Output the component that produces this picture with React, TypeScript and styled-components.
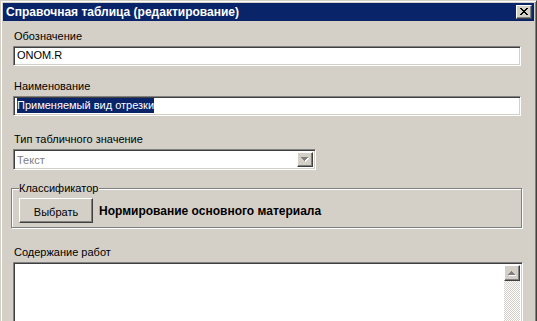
import { FC } from "react";
import styled, { createGlobalStyle } from "styled-components";

const GlobalStyle = createGlobalStyle`
  html, body {
    margin: 0;
    padding: 0;
    height: 321px;
    background: #d4d0c8;
    overflow: hidden;
  }
  body {
    font-family: "Liberation Sans", Arial, sans-serif;
    font-size: 11px;
    color: #000;
  }
`;

const raised = `
  box-sizing: border-box;
  border: 1px solid;
  border-color: #fff #404040 #404040 #fff;
  box-shadow: inset -1px -1px 0 #808080, inset 1px 1px 0 #d4d0c8;
  background: #d4d0c8;
`;

const sunken = `
  box-sizing: border-box;
  border: 1px solid;
  border-color: #808080 #fff #fff #808080;
  box-shadow: inset 1px 1px 0 #404040, inset -1px -1px 0 #d4d0c8;
  background: #fff;
`;

// окно обрезано снизу, как на снимке
const Window = styled.div`
  box-sizing: border-box;
  width: 537px;
  height: 380px;
  padding: 2px;
  border: 1px solid;
  border-color: #d4d0c8 #404040 #404040 #d4d0c8;
  box-shadow: inset 1px 1px 0 #fff, inset -1px -1px 0 #808080;
  background: #d4d0c8;
  display: flex;
  flex-direction: column;
`;

const TitleBar = styled.div`
  height: 18px;
  background: #0a246a;
  display: flex;
  align-items: center;
  justify-content: space-between;
  padding: 0 2px 0 3px;
`;

const TitleText = styled.div`
  color: #fff;
  font-weight: bold;
  font-size: 12px;
  line-height: 18px;
`;

const CloseButton = styled.div`
  ${raised};
  width: 16px;
  height: 14px;
  display: flex;
  align-items: center;
  justify-content: center;
  padding: 0 1px 1px 0;
`;

const Content = styled.div`
  display: flex;
  flex-direction: column;
  align-items: flex-start;
  padding: 0 13px 0 10px;
`;

const Label = styled.div<{ $top: number }>`
  margin: ${(p) => p.$top}px 0 3px 1px;
  height: 13px;
  line-height: 13px;
  white-space: nowrap;
`;

const Edit = styled.div`
  ${sunken};
  width: 508px;
  height: 20px;
  padding: 0 3px;
  line-height: 17px;
  white-space: nowrap;
`;

const Selected = styled.span`
  background: #0a246a;
  color: #fff;
  padding: 1px 0 2px;
`;

const Combo = styled.div`
  ${sunken};
  width: 303px;
  height: 21px;
  padding: 2px;
  display: flex;
  align-items: stretch;
`;

const ComboText = styled.div`
  flex: 1;
  color: #808080;
  line-height: 16px;
  padding-left: 1px;
`;

const ArrowButton = styled.div`
  ${raised};
  width: 16px;
  display: flex;
  align-items: center;
  justify-content: center;
`;

const GroupBox = styled.div`
  position: relative;
  box-sizing: border-box;
  width: 511px;
  margin: 18px 0 0 -2px;
  padding: 9px 0 4px 7px;
  border: 1px solid #808080;
  box-shadow: inset 1px 1px 0 #fff, 1px 1px 0 #fff;
  display: flex;
  align-items: center;
`;

const Legend = styled.div`
  position: absolute;
  top: -7px;
  left: 7px;
  line-height: 13px;
  background: #d4d0c8;
  padding-right: 1px;
`;

const Button = styled.div`
  ${raised};
  width: 74px;
  height: 25px;
  display: flex;
  align-items: center;
  justify-content: center;
  padding-top: 2px;
`;

const Classifier = styled.div`
  margin-left: 6px;
  font-weight: bold;
  font-size: 12px;
  white-space: nowrap;
`;

const Memo = styled.div`
  ${sunken};
  width: 510px;
  height: 100px;
  padding: 2px;
  display: flex;
  justify-content: flex-end;
`;

const ScrollBar = styled.div`
  width: 16px;
  display: flex;
  flex-direction: column;
`;

const ScrollTrack = styled.div`
  flex: 1;
  background-image: repeating-conic-gradient(#d4d0c8 0 25%, #fff 0 50%);
  background-size: 2px 2px;
`;

const ScrollButton = styled.div`
  ${raised};
  height: 16px;
  display: flex;
  align-items: center;
  justify-content: center;
`;

const CloseGlyph: FC = () => {
  const rows = [
    "11000011",
    "01100110",
    "00111100",
    "00011000",
    "00111100",
    "01100110",
    "11000011",
  ];
  return (
    <svg width="8" height="7" viewBox="0 0 8 7" shapeRendering="crispEdges">
      {rows.flatMap((r, y) =>
        r.split("").map((c, x) =>
          c === "1" ? <rect key={`${x}-${y}`} x={x} y={y} width="1" height="1" fill="#000" /> : null
        )
      )}
    </svg>
  );
};

const Triangle: FC<{ up?: boolean; color: string }> = ({ up, color }) => (
  <svg width="8" height="5" viewBox="0 0 8 5" shapeRendering="crispEdges">
    {up ? (
      <>
        <path d="M1 4h7M2 3h5M3 2h3M4 1h1" stroke="#fff" />
        <path d="M0 3.5h7M1 2.5h5M2 1.5h3M3 0.5h1" stroke={color} />
      </>
    ) : (
      <>
        <path d="M1 1.5h7M2 2.5h5M3 3.5h3M4 4.5h1" stroke="#fff" />
        <path d="M0 0.5h7M1 1.5h5M2 2.5h3M3 3.5h1" stroke={color} />
      </>
    )}
  </svg>
);

export default function App() {
  return (
    <>
      <GlobalStyle />
      <Window>
        <TitleBar>
          <TitleText>Справочная таблица (редактирование)</TitleText>
          <CloseButton>
            <CloseGlyph />
          </CloseButton>
        </TitleBar>
        <Content>
          <Label $top={9}>Обозначение</Label>
          <Edit>ONOM.R</Edit>

          <Label $top={14}>Наименование</Label>
          <Edit>
            <Selected>Применяемый вид отрезки</Selected>
          </Edit>

          <Label $top={17}>Тип табличного значение</Label>
          <Combo>
            <ComboText>Текст</ComboText>
            <ArrowButton>
              <Triangle color="#808080" />
            </ArrowButton>
          </Combo>

          <GroupBox>
            <Legend>Классификатор</Legend>
            <Button>Выбрать</Button>
            <Classifier>Нормирование основного материала</Classifier>
          </GroupBox>

          <Label $top={18}>Содержание работ</Label>
          <Memo>
            <ScrollBar>
              <ScrollButton>
                <Triangle up color="#808080" />
              </ScrollButton>
              <ScrollTrack />
            </ScrollBar>
          </Memo>
        </Content>
      </Window>
    </>
  );
}
